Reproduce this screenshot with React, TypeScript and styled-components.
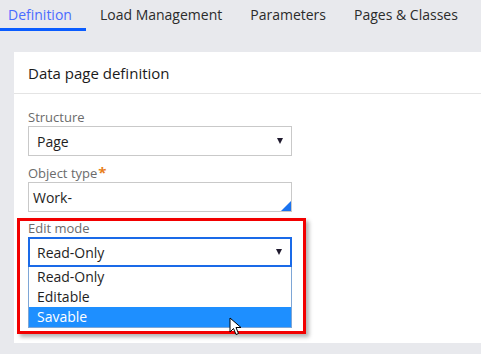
import React from 'react';
import styled, { createGlobalStyle } from 'styled-components';

const GlobalStyle = createGlobalStyle`
  html, body {
    margin: 0;
    padding: 0;
    background: #e8e9ed;
  }
  body {
    font-family: 'Open Sans', 'Noto Sans', sans-serif;
    color: #222;
  }
`;

const Page = styled.div`
  width: 481px;
  height: 354px;
  background: #e8e9ed;
  overflow: hidden;
  position: relative;
`;

const TabBar = styled.nav`
  display: flex;
  height: 31px;
`;

const Tab = styled.div<{ $active?: boolean; $first?: boolean }>`
  display: flex;
  align-items: center;
  padding: 0 14px 0 ${(p) => (p.$first ? '8px' : '14px')};
  font-size: 14px;
  color: ${(p) => (p.$active ? '#4a6cff' : '#2b2b2b')};
  border-bottom: 3px solid ${(p) => (p.$active ? '#0a5cff' : 'transparent')};
  box-sizing: border-box;
  white-space: nowrap;
`;

const Card = styled.section`
  margin: 21px 0 0 14px;
  height: 291px;
  background: #fff;
  display: flex;
  flex-direction: column;
`;

const CardHeader = styled.h2`
  margin: 0;
  height: 42px;
  display: flex;
  align-items: center;
  padding-left: 14px;
  font-size: 15px;
  font-weight: 400;
  color: #1a1a1a;
  border-bottom: 1px solid #e4e4e4;
`;

const CardBody = styled.div`
  padding: 15px 14px;
  display: flex;
  flex-direction: column;
  gap: 8px;
`;

const Field = styled.div`
  position: relative;
  width: 264px;
  display: flex;
  flex-direction: column;
`;

const Label = styled.label`
  font-size: 13px;
  line-height: 17px;
  color: #6b6b6b;
`;

const Required = styled.span`
  color: #e8801a;
  font-weight: 700;
  font-size: 15px;
  margin-left: 1px;
`;

const Box = styled.div<{ $focused?: boolean; $pad?: number }>`
  position: relative;
  height: 30px;
  box-sizing: border-box;
  border: ${(p) => (p.$focused ? '2px solid #1a6ae8' : '1px solid #c9c9c9')};
  display: flex;
  align-items: center;
  padding-left: ${(p) => (p.$focused ? (p.$pad ?? 8) - 1 : p.$pad ?? 8)}px;
  font-size: 14px;
  color: #1e1e1e;
  background: #fff;
`;

const Caret = styled.span`
  position: absolute;
  right: 8px;
  top: 50%;
  transform: translateY(-50%);
  width: 0;
  height: 0;
  border-left: 3.5px solid transparent;
  border-right: 3.5px solid transparent;
  border-top: 6px solid #1f1a2e;
`;

const Corner = styled.span`
  position: absolute;
  right: 0;
  bottom: 0;
  width: 0;
  height: 0;
  border-left: 10px solid transparent;
  border-bottom: 10px solid #1a73f0;
`;

const Options = styled.ul`
  margin: 0;
  padding: 0;
  list-style: none;
  border: 1px solid #7ea6d6;
  border-top: none;
  background: #fff;
`;

const Option = styled.li<{ $selected?: boolean }>`
  height: 20px;
  line-height: 20px;
  padding-left: 8px;
  font-size: 14px;
  color: ${(p) => (p.$selected ? '#fff' : '#1e1e1e')};
  background: ${(p) => (p.$selected ? '#1e8fff' : 'transparent')};
`;

const Highlight = styled.div`
  position: absolute;
  left: -11px;
  top: -2px;
  width: 289px;
  height: 116px;
  box-sizing: border-box;
  border: 3px solid #f20000;
  box-shadow: 3px 3px 4px rgba(0, 0, 0, 0.3);
  pointer-events: none;
`;

const Cursor = styled.svg`
  position: absolute;
  left: 229px;
  top: 317px;
`;

const tabs = ['Definition', 'Load Management', 'Parameters', 'Pages & Classes'];
const modes = ['Read-Only', 'Editable', 'Savable'];

export default function App() {
  return (
    <Page>
      <GlobalStyle />
      <TabBar>
        {tabs.map((t, i) => (
          <Tab key={t} $active={i === 0} $first={i === 0}>
            {t}
          </Tab>
        ))}
      </TabBar>
      <Card>
        <CardHeader>Data page definition</CardHeader>
        <CardBody>
          <Field>
            <Label>Structure</Label>
            <Box>
              Page
              <Caret />
            </Box>
          </Field>
          <Field>
            <Label>
              Object type<Required>*</Required>
            </Label>
            <Box $pad={4}>
              Work-
              <Corner />
            </Box>
          </Field>
          <Field>
            <Highlight />
            <Label>Edit mode</Label>
            <Box $focused>
              Read-Only
              <Caret />
            </Box>
            <Options>
              {modes.map((m) => (
                <Option key={m} $selected={m === 'Savable'}>
                  {m}
                </Option>
              ))}
            </Options>
          </Field>
        </CardBody>
      </Card>
      <Cursor width="14" height="20" viewBox="0 0 14 20">
        <path
          d="M1 1 L1 15 L4.5 11.5 L7 17.5 L9.5 16.5 L7 10.5 L12 10.5 Z"
          fill="#fff"
          stroke="#000"
          strokeWidth="1"
          strokeLinejoin="miter"
        />
      </Cursor>
    </Page>
  );
}
